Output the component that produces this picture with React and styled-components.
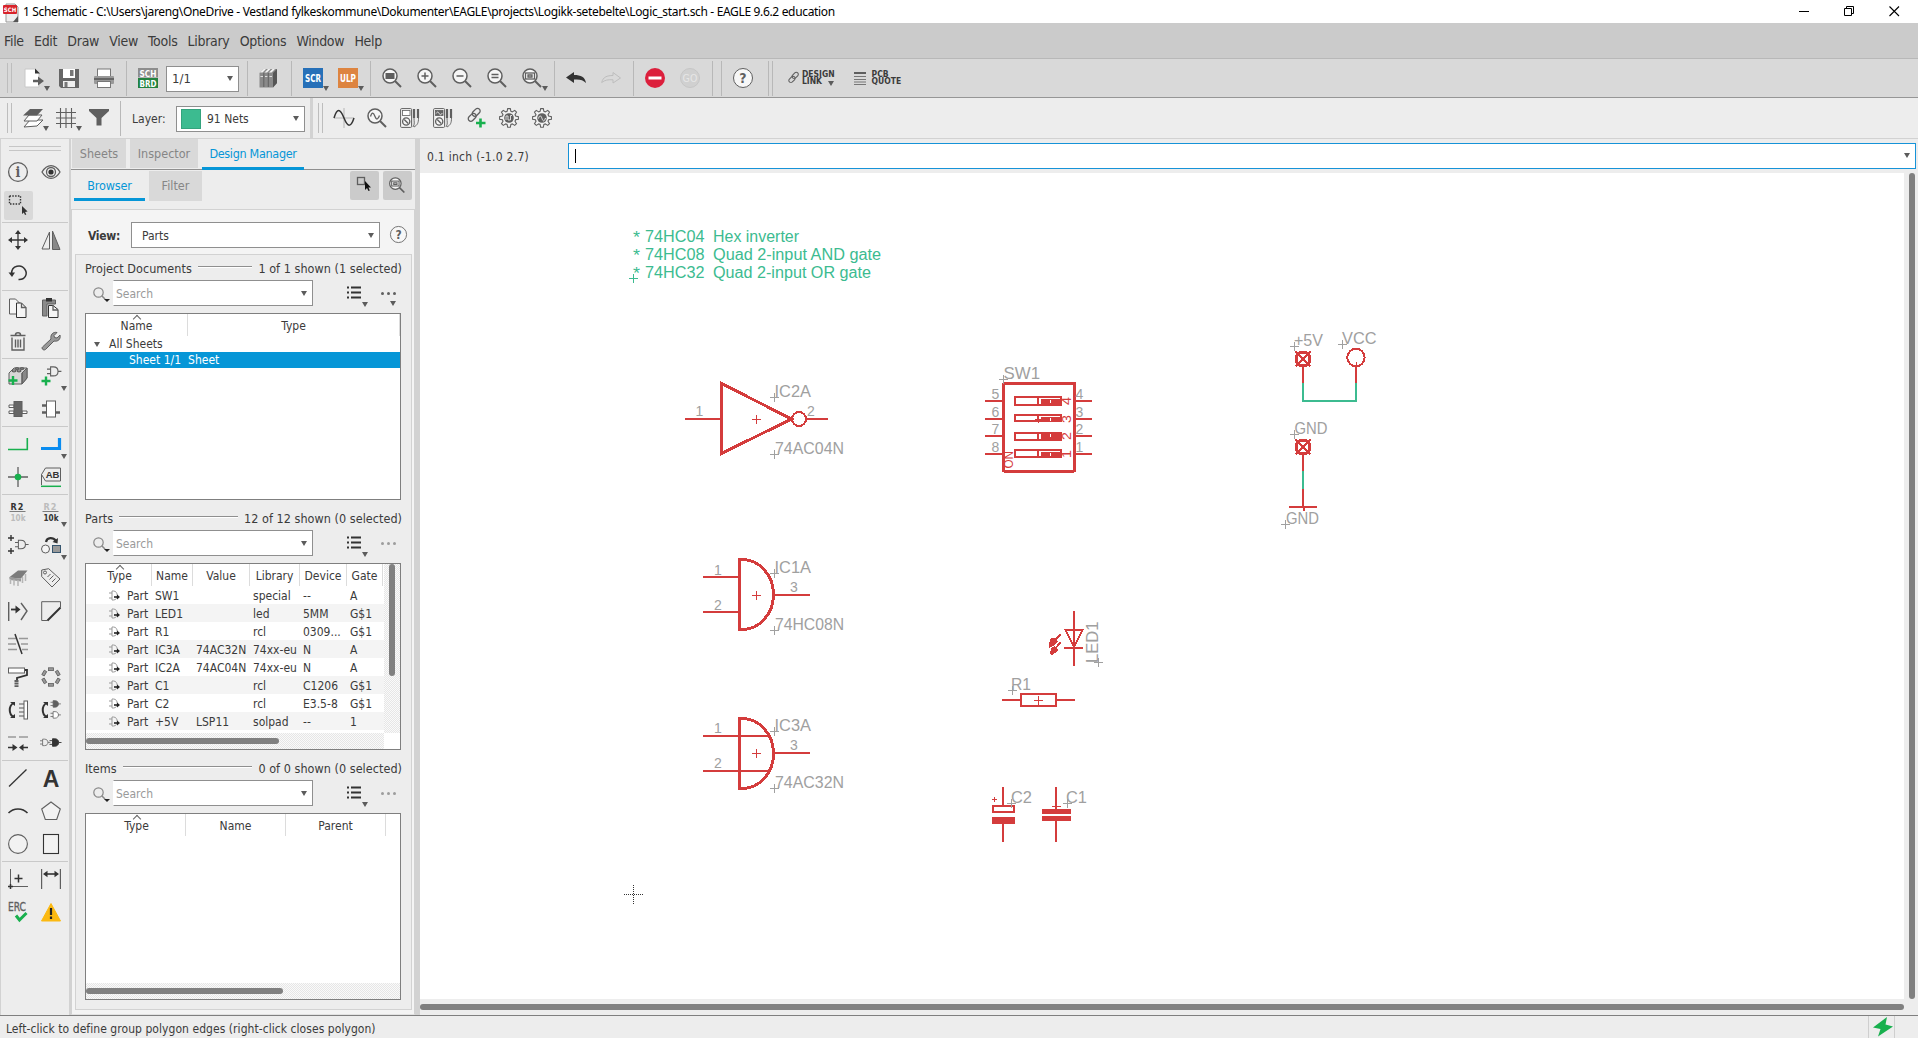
import React from 'react';
import styled, { createGlobalStyle, css } from 'styled-components';

const C = {
  text: '#3b3b3b', icon: '#5f5f5f', dark: '#333', bar: '#d9d9d9', panel: '#ededed', line: '#d2d2d2',
  edge: '#8f8f8f', blue: '#0696d7', red: '#d43c3c', net: '#3cbb90', label: '#a0a0a0', green: '#18b04e', thumb: '#808080',
};
const UI = '"DejaVu Sans Condensed", "DejaVu Sans", "Liberation Sans", sans-serif';

const Global = createGlobalStyle`
  * { box-sizing: border-box; }
  body { margin: 0; overflow: hidden; }
  svg { display: block; flex: none; overflow: visible; }
`;

const Window = styled.div`
  width: 1918px; height: 1038px; display: flex; flex-direction: column;
  background: ${C.panel}; color: ${C.text};
  font: 12px/16px ${UI}; white-space: pre; font-stretch: condensed;
`;

/* ---------- icons, all on a 20 x 20 grid ---------- */
const g = { fill: 'none', stroke: C.icon, strokeWidth: 1.3 };
const Lens = ({ children }) => (
  <>
    <circle cx="8" cy="8" r="7" fill="#f6f6f6" stroke={C.icon} strokeWidth="1.5" />
    <path d="M13 13l6 6" stroke={C.icon} strokeWidth="2" />
    {children}
  </>
);
const Gear = ({ children }) => (
  <>
    <path d="M8.700 .6h2.600l.6 2.700 1.400.6 2.400-1.500 1.800 1.800-1.500 2.400.6 1.400 2.800.6v2.600l-2.800.6-.6 1.400 1.500 2.400-1.800 1.800-2.400-1.500-1.400.6-.6 2.800H8.700l-.6-2.800-1.400-.6-2.400 1.500-1.800-1.800L4 13.200l-.6-1.400L.6 11.200V8.600L3.400 8 4 6.600 2.500 4.200l1.800-1.800 2.400 1.500 1.400-.6z" fill="#f2f2f2" stroke={C.icon} strokeWidth="1.100" />
    <circle cx="10" cy="10" r="4.800" fill={C.icon} />
    {children}
  </>
);
const Multi = ({ fill, wave }) => (
  <>
    <rect x=".6" y=".6" width="11" height="18.800" rx="1" fill="#f5f5f5" stroke={C.icon} />
    <rect x="2.500" y="2.500" width="7.500" height="5" fill={fill} stroke={C.icon} strokeWidth=".8" />
    {wave && <path d="M3.200 5.500c1-2 2-2 3 0s2 1.500 3-.5" fill="none" stroke="#fff" strokeWidth=".8" />}
    <circle cx="6.200" cy="13.500" r="3.600" {...g} /><path d="M4.200 11.500l4 4" {...g} />
    <path d="M14 1v9M18 1v9" stroke={C.icon} strokeWidth="2.200" />
    <path d="M14 10c0 4 1 6-1 9M18.500 10c0 5-1 7-4.500 9" {...g} strokeWidth=".9" />
  </>
);
const GateD = ({ x = 0, y = 0, s = 1, fill = 'none', color = C.icon }) => (
  <g transform={`translate(${x} ${y}) scale(${s})`}>
    <path d="M4 1h3c7 0 7 10 0 10H4zM0 3.500h4M0 8.500h4M12 6h4" fill={fill} stroke={color} strokeWidth="1.200" />
  </g>
);
const txt = (x, y, size, fill, s, extra = {}) => (
  <text x={x} y={y} fontSize={size} fill={fill} fontFamily={UI} textAnchor="middle" fontWeight="bold" {...extra}>{s}</text>
);
const Box3 = () => (
  <>
    <path d="M1 7l5-5h13v10l-5 6H1z" fill="#d7d7d7" stroke={C.icon} />
    <path d="M14 7v11M14 7l5-5M14 18l5-6V2l-5 5z" fill="#888" stroke={C.icon} />
    <ellipse cx="6" cy="4.800" rx="1.900" ry="1" {...g} /><ellipse cx="11" cy="4.800" rx="1.900" ry="1" {...g} />
    <ellipse cx="9" cy="2.500" rx="1.700" ry=".9" {...g} /><ellipse cx="14" cy="2.500" rx="1.700" ry=".9" {...g} />
  </>
);
const Chain = () => (
  <g fill="none" stroke={C.icon} strokeWidth="1.300">
    <rect x="-2.600" y="-5.500" width="5.200" height="9" rx="2.600" transform="translate(9.500 5) rotate(45)" />
    <rect x="-2.600" y="-5.500" width="5.200" height="9" rx="2.600" transform="translate(5.500 10) rotate(45)" />
  </g>
);
const ICONS = {
  app: <><path d="M3 0h9l3 3v15H3z" fill="#eee" stroke="#999" /><path d="M15 12l-5 6h5z" fill="#555" /><rect x="0" y="1" width="14" height="9" rx="1" fill="#d8232a" />{txt(7, 8, 6, '#fff', 'SCH')}</>,
  export: <><path d="M1 1h10l4 4v14H1z" fill="#fff" stroke="#c8c8c8" /><path d="M11 .5V5.500h5z" fill="#333" /><path d="M9 13h7" stroke={C.icon} strokeWidth="2.500" /><path d="M14 8.500l6 4.500-6 4.500z" fill={C.icon} /></>,
  save: <><path d="M0 1h20v19H2l-2-2z" fill="#666" /><rect x="4" y="1" width="12" height="9" fill="#fff" /><rect x="11" y="2" width="3.500" height="6" fill="#777" /><rect x="4" y="13" width="12" height="6" fill="#f0f0f0" /><rect x="5.500" y="14" width="3" height="5" fill="#777" /></>,
  print: <><rect x="3.500" y="1" width="13" height="8" fill="#fff" stroke="#777" /><rect x="0" y="8" width="20" height="8" rx="1" fill="#999" /><path d="M0 11h20" stroke="#666" strokeWidth="2" /><rect x="3.500" y="13.500" width="13" height="6" fill="#fff" stroke="#777" /></>,
  schbrd: <><rect width="20" height="9.500" fill="#8d8d8d" /><rect y="10" width="20" height="10" fill="#23823f" />{txt(10, 8.700, 9.500, '#fff', 'SCH', { textLength: 17, lengthAdjust: 'spacingAndGlyphs' })}{txt(10, 18.600, 9.500, '#fff', 'BRD', { textLength: 17, lengthAdjust: 'spacingAndGlyphs' })}</>,
  library: <><path d="M.5 5l4-4h13.500v14l-4 4.500H.5z" fill="#8a8a8a" /><path d="M14 5l4-4v14l-4 4.500z" fill="#555" /><path d="M1 4.500L4.500 1H7L3.500 4.500zM5.500 4.500L9 1h2.500L8 4.500zM10 4.500L13.500 1H16l-3.500 3.500z" fill="#f2f2f2" /><path d="M1.500 8.500h2.500M6 8.500h2.500M10.500 8.500H13" stroke="#ddd" strokeWidth="1.200" /><path d="M4.800 5v14M9.300 5v14" stroke="#5c5c5c" strokeWidth=".9" /></>,
  scr: <><rect width="20" height="20" fill="#2670b8" />{txt(10, 14, 10, '#fff', 'SCR', { textLength: 16, lengthAdjust: 'spacingAndGlyphs' })}</>,
  ulp: <><rect width="20" height="20" fill="#dd8440" />{txt(10, 14, 10, '#fff', 'ULP', { textLength: 16, lengthAdjust: 'spacingAndGlyphs' })}</>,
  zoomFit: <Lens><rect x="3.500" y="5" width="9" height="6" fill={C.icon} /></Lens>,
  zoomIn: <Lens><path d="M4.500 8h7M8 4.500v7" {...g} strokeWidth="1.500" /></Lens>,
  zoomOut: <Lens><path d="M4.500 8h7" {...g} strokeWidth="1.500" /></Lens>,
  zoomEq: <Lens><path d="M4.500 6.500h7M4.500 9.500h7" {...g} strokeWidth="1.500" /></Lens>,
  zoomSel: <Lens><rect x="3.500" y="5" width="9" height="6" {...g} /><path d="M6 7h4v2H6z" {...g} /></Lens>,
  undo: <path d="M0 9.500L8 4v3c7 0 11 2 12 8-3-3-6-4-12-3.500V15z" fill="#333" />,
  redo: <path d="M19.500 10L12 4.500v3C6 7.500 2 9 .7 14.500 4 12 7 11.500 12 11.800V15z" fill="none" stroke="#bdbdbd" />,
  stop: <><circle cx="10" cy="10" r="10" fill="#dc1f3c" /><rect x="3.500" y="8.500" width="13" height="3" fill="#fff" /></>,
  go: <><circle cx="10" cy="10" r="9.500" fill="#d0d0d0" stroke="#c6c6c6" />{txt(10, 14, 10.500, '#e6e6e6', 'GO', { fontWeight: 'normal' })}</>,
  help: <><circle cx="10" cy="10" r="9.500" fill="#f7f7f7" stroke={C.icon} />{txt(10, 15, 14, C.icon, '?')}</>,
  layers: <><path d="M7 12l13 0-6 6-13 1z" fill="#fff" stroke={C.icon} /><path d="M6 7h13l-5 6H1z" fill="#fff" stroke={C.icon} /><path d="M7 1h13l-6 6.500H0z" fill={C.icon} /></>,
  grid: <path d="M4.500 0v20M10 0v20M15.500 0v20M0 4.500h20M0 10h20M0 15.500h20" stroke={C.icon} strokeWidth="1.100" />,
  filter: <path d="M0 1h20v2l-7.500 7v7.500h-5V10L0 3z" fill={C.icon} />,
  sine: <><path d="M10 0v20M0 10h20" stroke="#b5b5b5" /><path d="M0 10C3 0 6 0 10 10s7 9 10 0" fill="none" stroke={C.dark} strokeWidth="1.500" /></>,
  probe: <Lens><path d="M3.500 8.500c1.500-5 3-4 4.500 0s3 3 4.500-1" {...g} /></Lens>,
  meter: <Multi fill="#fff" />,
  meterWave: <Multi fill="#666" wave />,
  link: <><Chain /><path d="M14.500 10.500v9M10 15h9.500" stroke={C.green} strokeWidth="2.600" /></>,
  gear1: <Gear><path d="M7 12v-4h2v4h2.500v-4.500H13" fill="none" stroke="#ddd" /></Gear>,
  gear2: <Gear><path d="M6.500 10.500c1-3.500 2.300-3.500 3.500 0s2.300 3 3.500-.5" fill="none" stroke="#eee" /></Gear>,
  info: <><circle cx="10" cy="10" r="9.400" {...g} />{txt(10, 15, 14, C.icon, 'i', { fontFamily: '"DejaVu Serif", serif' })}</>,
  eye: <><path d="M1 10c5-8.500 13-8.500 18 0-5 8.500-13 8.500-18 0z" {...g} /><circle cx="10" cy="10" r="4.500" {...g} /><circle cx="10" cy="10" r="2.600" fill={C.dark} /></>,
  group: <><rect x="1.500" y="1" width="11" height="8" fill="none" stroke={C.dark} strokeWidth="1.400" strokeDasharray="1.500 1.300" /><path d="M14 11v8l1.800-1.600 1.200 2.600 1.300-.6-1.200-2.500 2.500-.3z" fill={C.dark} /></>,
  move: <><path d="M10 3v14M3 10h14" stroke={C.dark} strokeWidth="1.300" /><path d="M10 0l3 4H7zM10 20l3-4H7zM0 10l4-3v6zM20 10l-4-3v6z" fill={C.dark} /></>,
  mirror: <><path d="M8.500 2v17H1z" {...g} strokeWidth="1" /><path d="M11.500 1v18.500H19z" fill="#888" stroke={C.icon} /></>,
  rotate: <><path d="M3.500 11c0-9 10-10 13.500-4.500C20 11 17 17 10.500 16.500" fill="none" stroke={C.dark} strokeWidth="1.500" /><path d="M.5 9.500h6.500L4 14z" fill={C.dark} /></>,
  copy: <><path d="M1.500 1h6l4 4v11h-10z" fill="#f5f5f5" stroke={C.icon} /><path d="M8.500 5h5l4.500 4.500V19.500H8.500z" fill="#f5f5f5" stroke={C.dark} /><path d="M13.500 5v4.500H18" {...g} /></>,
  paste: <><path d="M1.500 2h13v4H6v12H1.500z" fill="#8a8a8a" stroke={C.icon} /><rect x="5" y="0" width="6" height="3.500" fill={C.dark} /><path d="M7.500 7.500H12l5 4V19.500H7.500z" fill="#f5f5f5" stroke={C.dark} /><path d="M12 7v5h5" {...g} /></>,
  trash: <><path d="M2.500 4.500h15M7.500 4c0-3 5-3 5 0" {...g} strokeWidth="1.600" /><path d="M4 6.500v12.500h12V6.500M7.500 8.500v8M10 8.500v8M12.500 8.500v8" {...g} strokeWidth="1.400" /></>,
  wrench: <path d="M1.500 16L10 8C9 4 12 .5 16 1.500l-3 3 .5 2 2.500.5 3-3c1 4-2 7-6 6L4.500 18.500c-2 1.500-4.500-1-3-2.500z" fill="#999" stroke={C.icon} />,
  addPart: <><Box3 /><path d="M5 10v9M.5 14.500h9" stroke={C.green} strokeWidth="2.400" /></>,
  addGate: <><GateD x="6" y="0" s=".9" /><path d="M5 10.500v9M.5 15h9" stroke={C.green} strokeWidth="2.400" /></>,
  chipFill: <><path d="M1 6h5v2.500H1zM1 12h5v2.500H1zM14 12h5v2.500h-5z" fill="#fff" stroke={C.icon} /><rect x="6" y="2.500" width="8" height="15" fill="#666" stroke={C.icon} /></>,
  chip: <><path d="M1 6.500h5M1 13.500h5M14 13.500h5" stroke={C.icon} strokeWidth="2.500" /><rect x="5.500" y="2" width="9" height="16" fill="#fff" stroke={C.icon} /></>,
  net: <path d="M0 15.500h19.300V4" fill="none" stroke={C.green} strokeWidth="1.600" />,
  bus: <path d="M0 14.500h18.500V4" fill="none" stroke="#098cf0" strokeWidth="3.200" />,
  junction: <><path d="M10 0v20M0 10h20" stroke={C.icon} strokeWidth="1.300" /><circle cx="10" cy="10" r="3.300" fill={C.green} /></>,
  label: <><path d="M.5 18V7.500L4.500 1h15v13h-15L.5 7.500" {...g} strokeWidth="1" />{txt(11.500, 11.200, 9.500, C.dark, 'AB', { fontFamily: '"Liberation Sans", sans-serif' })}<path d="M0 19.300h20" stroke={C.green} strokeWidth="1.500" /></>,
  name: <>{txt(9, 8, 9, C.dark, 'R2', { textLength: 13 })}<path d="M1.500 9.500h16" stroke={C.icon} strokeWidth=".8" />{txt(10, 18.500, 8.500, '#bcbcbc', '10k', { textLength: 15, lengthAdjust: 'spacingAndGlyphs' })}</>,
  value: <>{txt(9, 8, 9, '#bcbcbc', 'R2', { textLength: 13 })}<path d="M1.500 9.500h16" stroke={C.icon} strokeWidth=".8" />{txt(10, 18.500, 8.500, C.dark, '10k', { textLength: 15, lengthAdjust: 'spacingAndGlyphs' })}</>,
  gateSwap: <><GateD x="7" y="4.500" s=".85" /><path d="M3 0v6M0 3h6M3 13v6M0 16h6" stroke={C.dark} strokeWidth="1.400" /></>,
  replace: <><path d="M5 7c1-5 7-5 10-1" fill="none" stroke={C.dark} strokeWidth="2.200" /><path d="M11.500 7l5 1.500L17 3z" fill={C.dark} /><circle cx="4.500" cy="14" r="4" fill="#f5f5f5" stroke={C.icon} /><rect x="11.500" y="10.500" width="8" height="7" fill="#999" stroke="#36556e" /></>,
  package: <><path d="M1 9.500l9-7 9.500 0-6.500 8z" fill="#7c7c7c" /><path d="M1 9.500l12 1 0 3-11-1.500z" fill="#9a9a9a" /><path d="M2.500 11v5M6 11.500v6M10 12v6M14.500 9v6M17.500 6v7" stroke="#b5b5b5" strokeWidth="1.500" /></>,
  tag: <><path d="M.7 2l7-1.300L19 11l-8 8L.7 8.500z" {...g} strokeWidth="1" /><circle cx="4" cy="4.500" r="1.500" {...g} strokeWidth="1" /><path d="M6.500 9l3-3M8.500 11.500l4-4M11 14l3.500-3.500" {...g} strokeWidth="1" /></>,
  pinswap: <><path d="M.7 1v19M13 2l6 8-6 9" {...g} strokeWidth="1.400" /><path d="M3 8.500h6" stroke={C.dark} strokeWidth="1.800" /><path d="M7.500 4.500l5 4-5 4z" fill={C.dark} /></>,
  miter: <><path d="M19.500 6.500V.7H.7v18.800h6" {...g} strokeWidth="1" /><path d="M6.500 19.500l13-13" stroke={C.dark} strokeWidth="1.900" /></>,
  split: <><path d="M0 4.500h8M11 4.500h9M0 10h8M13 10h7M0 15.500h9M14 15.500h6" stroke="#999" strokeWidth="1.300" /><path d="M7 0l7 20" stroke={C.dark} strokeWidth="1.500" /></>,
  paint: <><rect x=".5" y="1" width="16" height="5" fill="#fff" stroke={C.icon} /><path d="M17 3h2v5L9 11v2" fill="none" stroke={C.dark} strokeWidth="1.800" /><path d="M8.500 13v7" stroke={C.icon} strokeWidth="4" strokeDasharray="2 .6" /></>,
  ring: <g fill="#999" stroke={C.icon} strokeWidth=".8">{[0, 60, 120, 180, 240, 300].map(a => <rect key={a} x="7.500" y=".8" width="5" height="2.800" transform={`rotate(${a} 10 10)`} />)}</g>,
  pinArr: <><path d="M5.500 3c-5 3-5 11 0 14" fill="none" stroke={C.dark} strokeWidth="2" /><path d="M2 2h5v4zM2 18h5v-4z" fill={C.dark} /><path d="M11 4h5M11 8h5M11 12h5M11 16h5" stroke="#888" strokeWidth="1.300" /><rect x="16" y="1" width="3.500" height="18" fill="#fff" stroke={C.icon} /></>,
  gateArr: <><path d="M5.500 3c-5 3-5 11 0 14" fill="none" stroke={C.dark} strokeWidth="2" /><path d="M2 2h5v4zM2 18h5v-4z" fill={C.dark} /><GateD x="9.500" y="0" s=".65" fill={C.icon} /><GateD x="9.500" y="11" s=".65" fill="#fff" /></>,
  optimize: <><path d="M0 4h8M11 4h9" stroke="#999" strokeWidth="1.600" /><path d="M0 14.500h6M20 14.500h-6" stroke={C.dark} strokeWidth="1.400" /><path d="M4.500 11l5 3.500-5 3.500zM15.500 11l-4.500 3.500 4.500 3.500z" fill={C.dark} /></>,
  invoke: <><GateD x="-1" y="5.500" s=".65" /><GateD x="8.500" y="5" s=".75" fill={C.dark} color={C.dark} /></>,
  line: <path d="M1 18.500L18.500 1.500" stroke={C.dark} strokeWidth="1.300" />,
  text: txt(10, 19, 23, C.dark, 'A', { fontFamily: '"Liberation Sans", sans-serif' }),
  arc: <path d="M.5 12c5-5.500 14-5.500 19 0" fill="none" stroke={C.dark} strokeWidth="1.500" />,
  polygon: <path d="M10 1l9.300 7-3.600 10.500H4.300L.7 8z" fill="#f2f2f2" stroke={C.icon} strokeWidth="1.100" />,
  circle: <circle cx="10" cy="10" r="9.400" fill="#f2f2f2" stroke={C.icon} strokeWidth="1.100" />,
  rect: <rect x="2.500" y=".5" width="15" height="19" fill="#f2f2f2" stroke={C.dark} strokeWidth="1.100" />,
  mark: <><path d="M2.500 0v15M5 17.500h15" {...g} strokeWidth="1" /><path d="M10.500 5.500v8M6.500 9.500h8M2.500 15v5M0 17.500h5" stroke={C.dark} strokeWidth="1.500" /></>,
  dimension: <><path d="M.6 0v20M19.400 0v20" {...g} strokeWidth="1.200" /><path d="M4 5h12" stroke={C.dark} strokeWidth="1.600" /><path d="M2 5l4.500-3.200v6.400zM18 5l-4.500-3.200v6.400z" fill={C.dark} /></>,
  erc: <>{txt(9, 9, 11.500, C.icon, 'ERC', { textLength: 18, lengthAdjust: 'spacingAndGlyphs', fontWeight: 'normal', stroke: C.icon, strokeWidth: 0.3 })}<path d="M8 13.500l3.500 4.500L18.500 11" fill="none" stroke={C.green} strokeWidth="3" /></>,
  warn: <><path d="M10 1.500L19.500 19H.5z" fill="#fbb912" stroke="#fbb912" strokeLinejoin="round" /><path d="M10 6v7M10 14.500v2.500" stroke="#222" strokeWidth="2.200" /></>,
  search: <><circle cx="5.500" cy="5.500" r="4.700" fill="none" stroke="#888" strokeWidth="1.200" /><path d="M9 9l3 3" stroke="#888" strokeWidth="1.500" /></>,
  list: <><path d="M0 1.500h2M0 6.500h2M0 11.500h2M4 1.500h10M4 6.500h10M4 11.500h10" stroke={C.dark} strokeWidth="2" /></>,
  pick: <><rect x="2.500" y=".5" width="7" height="7" {...g} /><path d="M10 4v9l2-2 1.500 3 1.300-.6-1.400-3H16z" fill="#111" /></>,
};
const Icon = ({ name, size = 20 }) => (
  <svg width={size} height={size} viewBox={`0 0 ${size} ${size}`}>{ICONS[name]}</svg>
);

const Arrow = styled.i`
  width: 0; height: 0; flex: none;
  border: 3px solid transparent; border-bottom: 0;
  border-top: 5px solid ${p => p.$color || '#5c5c5c'};
`;
const CornerArrow = styled(Arrow)`position: absolute; right: ${p => p.$r ?? -6}px; bottom: ${p => p.$b ?? -3}px;`;
const Btn = styled.span`position: relative; display: block; flex: none;`;
const Tool = ({ name, drop, r, b }) => (
  <Btn><Icon name={name} />{drop && <CornerArrow $r={r} $b={b} />}</Btn>
);

/* ---------- title, menu, toolbars ---------- */
const TitleBar = styled.header`
  height: 23px; background: #fff; display: flex; align-items: center; padding-left: 3px; color: #000;
  font: 12px/22px "Noto Sans", "Open Sans", sans-serif; font-stretch: normal;
  > svg { margin-top: 1px; }
`;
const Title = styled.span`margin-left: 4px; margin-top: 1px; letter-spacing: -0.335px; flex: 1;`;
const Controls = styled.div`
  display: flex; gap: 34px; width: 130px; padding: 0 0 1px 11px; align-items: center;
`;
const MenuBar = styled.nav`
  height: 36px; background: #cbcbcb; border-bottom: 1px solid #b8b8b8; display: flex; align-items: center;
  padding: 0 0 0 4px; gap: 10.2px; font-size: 14px; letter-spacing: -0.3px;
`;
const Toolbar = styled.div`
  display: flex; flex: none; align-items: center;
  ${p => p.$main
    ? css`height: 39px; background: ${C.bar}; border-bottom: 1px solid #969696; padding: 0 0 0 7px;`
    : css`height: 41px; background: ${C.panel}; border-bottom: 1px solid ${C.line}; padding: 0 0 0 7px;`}
`;
const Grip = styled.span`
  width: 5px; height: 30px; flex: none; border: solid #bdbdbd; border-width: 0 1px; margin-right: ${p => p.$after ?? 12}px;
`;
const Select = styled.div`
  width: ${p => p.$w}px; height: 26px; background: #fff; border: 1px solid #8f8f8f; flex: none;
  display: flex; align-items: center; padding: 2px 5px 0 ${p => p.$pl ?? 5}px; color: ${p => p.$muted ? '#9a9a9a' : C.text};
  font-size: ${p => p.$fs || 12}px;
  > ${Arrow} { margin: -1px 0 0 auto; }
`;
const Group = styled.div`
  display: flex; align-items: center; gap: ${p => p.$gap ?? 15}px; height: 35px; flex: none;
  padding: 0 ${p => p.$pr ?? 12}px 0 ${p => p.$pl ?? 11}px;
  ${p => !p.$open && css`border-right: 1px solid #b8b8b8;`}
  > ${Select} { margin-top: 2px; padding-top: 0; }
`;
const Swatch = styled.span`width: 20px; height: 20px; background: ${C.net}; border: 1px solid #34a37d; margin-right: 6px;`;
const Stacked = styled.span`
  font: bold 8.5px/7.500px ${UI}; font-stretch: condensed; display: flex; flex-direction: column;
`;
const StackLine = styled.span`display: flex; align-items: flex-end; gap: 6px;`;
const ToolGap = styled.span`width: ${p => p.$w}px; flex: none;`;
const LinkItem = styled.div`display: flex; align-items: center; gap: ${p => p.$gap}px; margin-right: ${p => p.$mr || 0}px;`;
const LayerLabel = styled.span`width: 44px; padding-top: 2px;`;
const Divider = styled.span`width: 3px; height: 40px; background: ${C.line}; margin-right: 5px;`;

/* ---------- palette ---------- */
const Body = styled.div`flex: 1; min-height: 0; display: flex;`;
const Palette = styled.aside`
  width: 71px; flex: none; border-left: 1px solid ${C.line}; border-right: 2px solid ${C.line}; padding: 0 1px;
`;
const PaletteGrip = styled.div`
  height: 5px; margin: 7px 7px 5px; border: solid #c6c6c6; border-width: 1px 0;
`;
const PalRow = styled.div`display: grid; grid-template-columns: 33px 33px; height: 33px;`;
const PalSep = styled.div`height: 2px; border-top: 1px solid #c9c9c9;`;
const Cell = styled.div`
  padding: 6px; ${p => p.$on && css`background: ${C.bar}; border-radius: 2px; margin: 2px; padding: 4px;`}
`;
const PALETTE = [
  ['info', 'eye'], ['group*', ''], '-', ['move', 'mirror'], ['rotate', ''], '-', ['copy', 'paste'], ['trash', 'wrench'], '-',
  ['addPart', 'addGate+'], ['chipFill', 'chip'], '-', ['net', 'bus+'], ['junction', 'label'], '-', ['name', 'value+'],
  ['gateSwap', 'replace+'], ['package', 'tag'], ['pinswap', 'miter'], ['split', ''], ['paint', 'ring'], ['pinArr', 'gateArr'],
  ['optimize', 'invoke'], '-', ['line', 'text'], ['arc', 'polygon'], ['circle', 'rect'], '-', ['mark', 'dimension'], ['erc', 'warn'],
];
const ToolPalette = () => (
  <Palette>
    <PaletteGrip />
    {PALETTE.map((row, i) => row === '-' ? <PalSep key={i} /> : (
      <PalRow key={i}>
        {row.map((n, j) => (
          <Cell key={j} $on={n.endsWith('*')}>
            {n && <Tool name={n.replace(/[+*]/, '')} drop={n.endsWith('+')} r={-5} b={-5} />}
          </Cell>
        ))}
      </PalRow>
    ))}
  </Palette>
);

/* ---------- design manager ---------- */
const Side = styled.section`width: 344px; flex: none; display: flex; flex-direction: column;`;
const Tabs = styled.div`
  display: flex; gap: 4px; height: ${p => p.$sub ? 39 : 31}px; flex: none; position: relative;
  padding: ${p => p.$sub ? '1px 3px 0' : '0 1px'};
  ${p => !p.$sub && css`border-bottom: 1px solid #8f8f8f;`}
`;
const Tab = styled.div`
  width: ${p => p.$w}px; height: ${p => p.$h}px; text-align: center; line-height: ${p => p.$h}px; font-size: 12.500px;
  letter-spacing: ${p => p.$track ?? 0}px;
  background: ${p => p.$on ? 'transparent' : C.bar}; color: ${p => p.$on ? C.blue : '#868686'};
  ${p => p.$on && css`border-bottom: 3px solid ${C.blue}; height: ${p.$h + (p.$over || 0)}px;`}
`;
const SquareBtn = styled.div`
  width: 29px; height: 29px; background: #cbcbcb; border-radius: 2px; padding: 6px 5px;
  margin-left: ${p => p.$push ? 'auto' : 0};
`;
const Page = styled.div`
  flex: 1; background: #f4f4f4; border: 1px solid ${C.line}; border-bottom-color: #e2e2e2; padding: 12px 2px 3px 3px;
`;
const ViewRow = styled.div`
  display: flex; align-items: center; height: 26px; margin: 0 4px 6px 13px;
  > svg { margin: -2px 0 0 10px; }
`;
const ViewLabel = styled.b`width: 43px; font-size: 12px; letter-spacing: -0.3px; padding-top: 1px;`;
const Frame = styled.div`height: 756px; border: 1px solid ${C.line}; background: ${C.panel}; padding: 0 9px;`;
const Section = styled.div`height: 250px;`;
const SecTitle = styled.div`
  height: 25px; padding-top: 3px; display: flex; align-items: center; gap: 6px; font-size: 12.500px; letter-spacing: 0.04px;
`;
const Rule = styled.span`flex: 1; height: 2px; margin-top: -4px; background: linear-gradient(#8f8f8f 50%, #fff 50%);`;
const SearchRow = styled.div`display: flex; align-items: flex-start; height: 33px; padding-left: 8px;`;
const SearchIcon = styled.span`width: 20px; height: 26px; padding-top: 7px; position: relative;`;
const SearchBox = styled(Select)`border-left-color: #fff; padding-left: 2px;`;
const ListBtn = styled.span`position: relative; margin: 6px 0 0 34px; width: 14px; height: 14px;`;
const Dots = styled.span`
  position: relative; display: flex; gap: 3px; margin: 12px 0 0 20px; height: 3px;
  i { width: 3px; height: 3px; border-radius: 2px; background: ${p => p.$off ? '#9d9d9d' : '#606060'}; }
`;
const Drop = styled.b`
  position: absolute; left: 9px; top: 9px; border: 3px solid transparent; border-bottom: 0; border-top: 5px solid #5c5c5c;
`;
const Table = styled.div`
  width: 316px; height: 187px; border: 1px solid #7f7f7f; background: #fff; display: flex; flex-direction: column; overflow: hidden;
`;
const Cols = styled.div`
  display: grid; flex: none; grid-template-columns: ${p => p.$cols}; height: ${p => p.$head ? 22 : 18}px;
  line-height: ${p => p.$head ? 25 : 16}px; background: ${p => p.$bg || 'transparent'};
`;
const Head = styled.span`
  position: relative; height: 22px; text-align: center; border-right: 1px solid #dcdcdc; padding-left: ${p => p.$pl || 0}px;
`;
const Caret = styled.i`
  position: absolute; left: calc(50% + ${p => p.$dx || 0}px - 3px); top: 2px; width: 6px; height: 6px;
  border: solid #666; border-width: 1px 0 0 1px; transform: rotate(45deg);
`;
const Td = styled.span`padding: 2px 0 0 3px; height: 18px; display: flex; align-items: center; gap: 6px;`;
const PartIcon = styled.span`padding-left: 20px; display: flex;`;
const Tree = styled.div`
  height: 16px; line-height: 15px; display: flex; align-items: center; padding: 1px 0 0 ${p => p.$pl}px; gap: ${p => p.$gap}px;
  background: ${p => p.$on ? C.blue : '#fff'}; color: ${p => p.$on ? '#fff' : C.text}; flex: none;
`;
const TableBody = styled.div`display: flex; flex: 1; min-height: 0;`;
const Rows = styled.div`width: 298px;`;
const weave = 'repeating-conic-gradient(#e6e6e6 0 25%, #fafafa 0 50%) 0 0 / 2px 2px';
const VTrack = styled.div`
  width: 16px; height: 169px; background: ${weave}; padding: 0 5px;
  &::before { content: ''; display: block; height: 112px; background: ${C.thumb}; border-radius: 3px; }
`;
const HTrack = styled.div`
  width: ${p => p.$w}px; height: 16px; margin-top: auto; flex: none; background: ${weave}; padding: 5px 0;
  &::before { content: ''; display: block; width: ${p => p.$t}px; height: 6px; background: ${C.thumb}; border-radius: 3px; }
`;

const PARTS = [
  ['SW1', '', 'special', '--', 'A'], ['LED1', '', 'led', '5MM', 'G$1'], ['R1', '', 'rcl', '0309...', 'G$1'],
  ['IC3A', '74AC32N', '74xx-eu', 'N', 'A'], ['IC2A', '74AC04N', '74xx-eu', 'N', 'A'], ['C1', '', 'rcl', 'C1206', 'G$1'],
  ['C2', '', 'rcl', 'E3.5-8', 'G$1'], ['+5V', 'LSP11', 'solpad', '--', '1'],
];
const PCOLS = '66px 41px 57px 50px 47px 36px';

const Block = ({ title, count, active, children }) => (
  <Section>
    <SecTitle>{title}<Rule />{count}</SecTitle>
    <SearchRow>
      <SearchIcon><Icon name="search" size={14} /><CornerArrow as={SmallArrow} /></SearchIcon>
      <SearchBox $w={200} $muted>Search<Arrow /></SearchBox>
      <ListBtn><Icon name="list" size={14} /><CornerArrow $r={-7} $b={-7} /></ListBtn>
      <Dots $off={!active}><i /><i /><i />{active && <Drop />}</Dots>
    </SearchRow>
    {children}
  </Section>
);
const SmallArrow = styled.i`
  && { position: absolute; right: 3px; bottom: 4px; border: 3px solid transparent; border-bottom: 0; border-top: 3px solid #222; }
`;

const DesignManager = () => (
  <Side>
    <Tabs>
      <Tab $w={54} $h={29}>Sheets</Tab>
      <Tab $w={68} $h={29}>Inspector</Tab>
      <Tab $w={102} $h={29} $on $over={2} $track={-0.32}>Design Manager</Tab>
    </Tabs>
    <Tabs $sub>
      <Tab $w={71} $h={30} $on $track={-0.15}>Browser</Tab>
      <Tab $w={53} $h={30}>Filter</Tab>
      <SquareBtn $push><Icon name="pick" /></SquareBtn>
      <SquareBtn><svg width="18" height="18" viewBox="-1 0 22 22">{ICONS.zoomSel}</svg></SquareBtn>
    </Tabs>
    <Page>
      <ViewRow>
        <ViewLabel>View:</ViewLabel>
        <Select $w={249} $pl={10}>Parts<Arrow /></Select>
        <svg width="17" height="17" viewBox="0 0 20 20">{ICONS.help}</svg>
      </ViewRow>
      <Frame>
        <Block title="Project Documents" count="1 of 1 shown (1 selected)" active>
          <Table>
            <Cols $head $cols="102px 212px"><Head>Name<Caret /></Head><Head>Type</Head></Cols>
            <Tree $pl={8} $gap={9}><Arrow />All Sheets</Tree>
            <Tree $on $pl={43} $gap={7}><span>Sheet 1/1</span><span>Sheet</span></Tree>
          </Table>
        </Block>
        <Block title="Parts" count="12 of 12 shown (0 selected)">
          <Table>
            <TableBody>
              <Rows>
                <Cols $head $cols={PCOLS}>
                  {['Type', 'Name', 'Value', 'Library', 'Device', 'Gate'].map((h, i) => (
                    <Head key={h} $pl={i ? 0 : 2}>{h}{i === 0 && <Caret $dx={1} />}</Head>
                  ))}
                </Cols>
                {PARTS.map((r, i) => (
                  <Cols key={r[0]} $cols={PCOLS} $bg={i % 2 ? '#f4f4f4' : '#fff'}>
                    <Td>
                      <PartIcon>
                        <svg width="12" height="12" viewBox="0 0 12 12">
                          <path d="M3 1h1.500c5 0 5 9 0 9H3M0 3h3M0 8h3M3 1v9" fill="none" stroke="#999" />
                          <path d="M5 7h4" stroke="#222" strokeWidth="1.600" /><path d="M8 4.500l3 2.500-3 2.500z" fill="#222" />
                        </svg>
                      </PartIcon>Part
                    </Td>
                    {r.map((c, j) => <Td key={j}>{c}</Td>)}
                  </Cols>
                ))}
              </Rows>
              <VTrack />
            </TableBody>
            <HTrack $w={298} $t={193} />
          </Table>
        </Block>
        <Block title="Items" count="0 of 0 shown (0 selected)">
          <Table>
            <Cols $head $cols="100px 100px 100px"><Head $pl={2}>Type<Caret $dx={1} /></Head><Head>Name</Head><Head>Parent</Head></Cols>
            <HTrack $w={314} $t={197} />
          </Table>
        </Block>
      </Frame>
    </Page>
  </Side>
);

/* ---------- schematic sheet ---------- */
const Work = styled.main`flex: 1; min-width: 0; display: flex; flex-direction: column; border-left: 5px solid ${C.line};`;
const CommandRow = styled.div`height: 34px; flex: none; display: flex; align-items: center; padding: 0 2px 0 7px;`;
const Coord = styled.span`width: 141px; letter-spacing: 0.28px; padding-top: 2px;`;
const CommandBox = styled(Select)`border-color: #1693d8; padding: 0 5px 0 6px;`;
const TextCursor = styled.span`width: 1px; height: 14px; background: #000;`;
const SheetArea = styled.div`display: grid; grid-template: 826px 16px / 1484px 14px; background: ${C.panel};`;
const Sheet = styled.svg`background: #fff; font-family: "Liberation Sans", Arial, sans-serif;`;
const SheetV = styled.div`padding: 0 3px 0 5px; &::before { content: ''; display: block; height: 826px; background: ${C.thumb}; border-radius: 3px; }`;
const SheetH = styled.div`padding: 5px 0; &::before { content: ''; display: block; height: 6px; background: ${C.thumb}; border-radius: 3px; }`;

const Cross = ({ x, y, r = 4.500, c = C.label, w = 1 }) => (
  <path d={`M${x - r} ${y}h${2 * r}M${x} ${y - r}v${2 * r}`} stroke={c} strokeWidth={w} fill="none" />
);
const Label = styled.text`white-space: pre;`;
const T = ({ x, y, w, s, c = C.label, size = 16.500, rot }) => (
  <Label x={x} y={y} fill={c} fontSize={size} textLength={w} lengthAdjust="spacingAndGlyphs"
    transform={rot ? `rotate(-90 ${x} ${y})` : undefined}>{s}</Label>
);
const Pin = ({ x, y, s }) => <T x={x} y={y} s={s} size={14} />;
const R = ({ d, w = 2, f = 'none', c = C.red }) => <path d={d} stroke={c} strokeWidth={w} fill={f} />;

const Gate = ({ y, c, name, value, through }) => (
  <g>
    <R d={`M739.500 ${c - 35}H742A31.500 35 0 0 1 742 ${c + 35}H739.500Z`} w={3} />
    <R d={`M703 ${c - 17.500}H${through ? 768 : 739}M703 ${c + 17.500}H${through ? 768 : 739}M774 ${y}H810`} />
    <Pin x={714} y={y - 20.500} s="1" /><Pin x={714} y={y + 15} s="2" /><Pin x={790} y={y - 3} s="3" />
    <Cross x={756.500} y={y + 0.500} c={C.red} />
    <T x={774.500} y={y - 22} w={36.500} s={name} /><Cross x={774.500} y={y - 21.500} />
    <T x={775} y={y + 35} w={69} s={value} /><Cross x={774.500} y={y + 35.500} />
  </g>
);
const Pad = ({ y }) => (
  <g>
    <circle cx="1303" cy={y} r="7" fill="#fff" stroke={C.red} strokeWidth="3" />
    <R d={`M1295.500 ${y - 7.500}l15 15M1310.500 ${y - 7.500}l-15 15`} w={2} />
  </g>
);

const Schematic = () => (
  <Sheet width="1484" height="826" viewBox="420 173 1484 826" shapeRendering="crispEdges">
    {[['74HC04', 'Hex inverter', 86, 242], ['74HC08', 'Quad 2-input AND gate', 168, 260], ['74HC32', 'Quad 2-input OR gate', 158, 278]].map(([a, b, w, y]) => (
      <g key={a}>
        <T x={633} y={y + 1} w={7} s="*" c={C.net} /><T x={645} y={y} w={59.500} s={a} c={C.net} size={16} />
        <T x={713} y={y} w={w} s={b} c={C.net} size={16} />
      </g>
    ))}
    <Cross x={633.500} y={278.500} c={C.net} />

    <R d="M721.500 383.500L791.500 419L721.500 453.500Z" w={3} />
    <circle cx="799" cy="419" r="7" fill="none" stroke={C.red} strokeWidth="2" />
    <R d="M685 419H720M806 419H828" /><Cross x={756.500} y={419.500} c={C.red} />
    <Pin x={695.500} y={416} s="1" /><Pin x={807} y={416} s="2" />
    <T x={774.500} y={397} w={36.500} s="IC2A" /><Cross x={774.500} y={397.500} />
    <T x={775} y={454} w={69} s="74AC04N" /><Cross x={774.500} y={454.500} />

    <Gate y={595} c={594.500} name="IC1A" value="74HC08N" />
    <Gate y={753} c={753.500} name="IC3A" value="74AC32N" through />

    <rect x="1003.500" y="383.500" width="71" height="87.500" rx=".5" fill="none" stroke={C.red} strokeWidth="3" />
    {[[401, 396, 399, 406, '5', '4'], [419, 414, 417, 422, '6', '3'], [436, 432, 433, 441, '7', '2'], [454, 449, 452, 458, '8', '1']].map(([y, t, f, b, l, r]) => (
      <g key={y}>
        <R d={`M985 ${y}h18M1075 ${y}h17`} />
        <rect x="1015" y={t + 1} width="46" height={b - t - 2} fill="none" stroke={C.red} strokeWidth="2" />
        <R d={`M1038 ${t}V${b}`} />
        <rect x="1041" y={f} width="21" height={b - f} fill={C.red} />
        <path d={`M1050.500 ${f + 1}v3`} stroke="#fff" />
        <Pin x={991.500} y={y - 2} s={l} /><Pin x={1075.500} y={y - 2} s={r} />
        <T x={1070.500} y={y + 4} w={8} s={r} c={C.red} size={12.500} rot />
      </g>
    ))}
    <Cross x={1038.500} y={419.500} r={3.500} c={C.red} />
    <T x={1012.500} y={468.500} w={17.500} s="ON" c={C.red} size={12} rot />
    <T x={1003.500} y={379} w={36.500} s="SW1" size={17} /><Cross x={1003.500} y={379.500} />

    <T x={1294} y={346} w={29} s="+5V" /><Cross x={1294.500} y={346.500} />
    <T x={1342} y={344} w={34.500} s="VCC" /><Cross x={1342.500} y={344.500} />
    <Pad y={359} /><Pad y={447} />
    <circle cx="1356" cy="357.500" r="8.700" fill="none" stroke={C.red} strokeWidth="2" />
    <R d="M1356.500 362v4" w={1} />
    <R d="M1303 366v17M1356 366v17M1303 455v52M1289 507h28M1303.500 507v4" />
    <R d="M1303 383v18h53v-18M1303 471v18" c={C.net} />
    <T x={1294.500} y={434} w={33} s="GND" /><Cross x={1294.500} y={434.500} />
    <T x={1286} y={524} w={33} s="GND" /><Cross x={1285.500} y={524.500} />

    <R d="M1074 611V666M1065.500 630h17L1074 647ZM1064 648h19" />
    <R d="M1060.500 634.500l-7 7M1060.500 642.500l-7 8" />
    <path d="M1049 644l2-6 4 0 3 4-5 4-4 2zM1050 654l1-6 4-2 3 4-3 3-3 2z" fill={C.red} />
    <T x={1098} y={663} w={41.500} s="LED1" size={16.500} rot /><Cross x={1098.500} y={662.500} />
    <R d="M1002 700h19M1057 700h18M1021 694h35v12h-35z" /><Cross x={1038.500} y={700.500} c={C.red} />
    <T x={1011} y={690} w={20} s="R1" /><Cross x={1012.500} y={690.500} />

    <R d="M1003 787v20M1003 824v18M993 806h21v6h-21z" /><R d="M992 820.500h23" w={7} />
    <Cross x={994.500} y={799.500} r={2.500} c={C.red} />
    <T x={1011} y={803} w={21} s="C2" /><Cross x={1011.500} y={803.500} />
    <R d="M1056 787v22M1056 821v21" /><R d="M1042 811.500h29M1042 818.500h29" w={5} />
    <Cross x={1056.500} y={806.500} c={C.red} /><T x={1066} y={803} w={21} s="C1" /><Cross x={1067.500} y={803.500} />

    <path d="M624 894.500h19M633.500 885v19" stroke="#333" strokeDasharray="1 1" />
  </Sheet>
);

const StatusBar = styled.footer`
  height: 23px; flex: none; border-top: 1px solid #7f7f7f; display: flex; align-items: center; padding-left: 6px;
  justify-content: space-between;
`;
const Hint = styled.span`letter-spacing: 0.055px; padding-top: 4px;`;
const Bolt = styled.span`
  width: 27px; height: 22px; margin-right: 23px; border: solid #cfcfcf; border-width: 0 1px; padding: 1px 0 0 4px;
`;

export default function App() {
  return (
    <Window>
      <Global />
      <TitleBar>
        <Icon name="app" size={16} />
        <Title>1 Schematic - C:\Users\jareng\OneDrive - Vestland fylkeskommune\Dokumenter\EAGLE\projects\Logikk-setebelte\Logic_start.sch - EAGLE 9.6.2 education</Title>
        <Controls>
          <svg width="11" height="11"><path d="M0 5.500h10" stroke="#000" /></svg>
          <svg width="11" height="11"><path d="M.5 2.500h7v7h-7zM2.500 2.500v-2h7v7h-2" fill="none" stroke="#000" /></svg>
          <svg width="11" height="11"><path d="M.5.5l9.500 9.500M10 .5L.5 10" stroke="#000" strokeWidth="1.100" /></svg>
        </Controls>
      </TitleBar>
      <MenuBar>
        {['File', 'Edit', 'Draw', 'View', 'Tools', 'Library', 'Options', 'Window', 'Help'].map(m => <span key={m}>{m}</span>)}
      </MenuBar>
      <Toolbar $main>
        <Grip />
        <Group $pl={0}><Tool name="export" drop /><Tool name="save" /><Tool name="print" /></Group>
        <Group $gap={8} $pr={8}><Tool name="schbrd" /><Select $w={73} $fs={13}>1/1<Arrow /></Select></Group>
        <Group><Tool name="library" /></Group>
        <Group><Tool name="scr" drop /><Tool name="ulp" drop /></Group>
        <Group>
          <Tool name="zoomFit" /><Tool name="zoomIn" /><Tool name="zoomOut" /><Tool name="zoomEq" /><Tool name="zoomSel" drop />
        </Group>
        <Group><Tool name="undo" /><Tool name="redo" /></Group>
        <Group><Tool name="stop" /><Tool name="go" /></Group>
        <Group $pl={0} $pr={8} />
        <Group $pr={15}><Tool name="help" /></Group>
        <Group $pl={0} $pr={3} />
        <ToolGap $w={14} />
        <LinkItem $gap={3} $mr={19}>
          <svg width="12" height="12" viewBox="0 0 15 15"><Chain /></svg>
          <Stacked><span>DESIGN</span><StackLine>LINK<Arrow /></StackLine></Stacked>
        </LinkItem>
        <LinkItem $gap={6}>
          <svg width="12" height="13"><path d="M0 1h12" stroke={C.icon} strokeWidth="2" /><path d="M0 4.500h12M0 7.500h12M0 10h12M0 12.500h12" stroke="#777" /></svg>
          <Stacked><span>PCB</span><span>QUOTE</span></Stacked>
        </LinkItem>
      </Toolbar>
      <Toolbar>
        <Grip $after={11} />
        <Group $pl={0} $gap={13} $pr={11}><Tool name="layers" drop /><Tool name="grid" drop /><Tool name="filter" /></Group>
        <Group $open $gap={0} $pr={5}>
          <LayerLabel>Layer:</LayerLabel>
          <Select $w={129} $pl={4}><Swatch />91 Nets<Arrow /></Select>
        </Group>
        <Divider />
        <Grip $after={11} />
        <Group $pl={0} $gap={13} $open>
          {['sine', 'probe', 'meter', 'meterWave', 'link', 'gear1', 'gear2'].map(n => <Tool key={n} name={n} />)}
        </Group>
      </Toolbar>
      <Body>
        <ToolPalette />
        <DesignManager />
        <Work>
          <CommandRow>
            <Coord>0.1 inch (-1.0 2.7)</Coord>
            <CommandBox $w={1348}><TextCursor /><Arrow /></CommandBox>
          </CommandRow>
          <SheetArea><Schematic /><SheetV /><SheetH /></SheetArea>
        </Work>
      </Body>
      <StatusBar>
        <Hint>Left-click to define group polygon edges (right-click closes polygon)</Hint>
        <Bolt><svg width="20" height="20"><path d="M14 0L0 10.500l7.500 1.500L5 19.500 20 9.500 12.500 7.500z" fill={C.green} /></svg></Bolt>
      </StatusBar>
    </Window>
  );
}
